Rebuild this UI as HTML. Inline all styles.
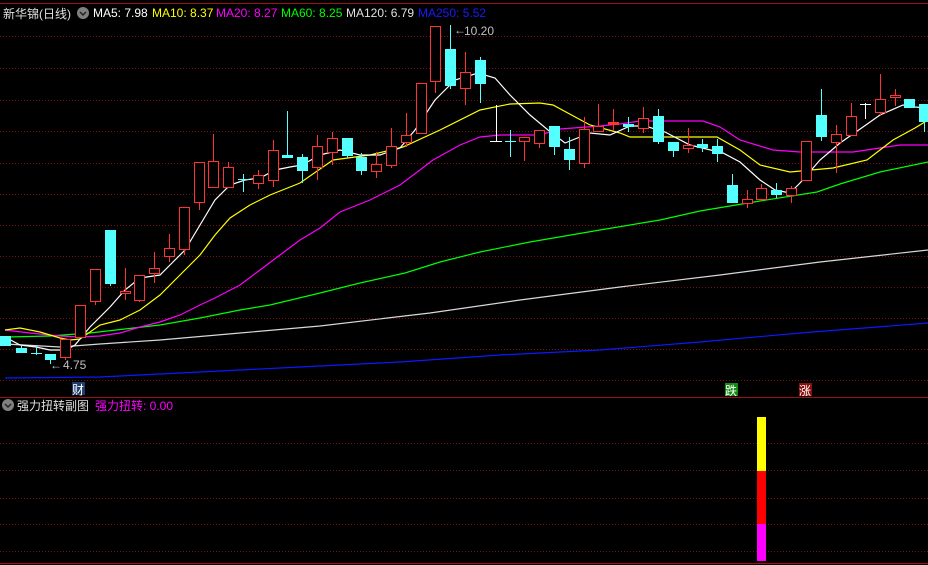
<!DOCTYPE html>
<html><head><meta charset="utf-8"><style>
html,body{margin:0;padding:0;background:#000;width:928px;height:565px;overflow:hidden}
svg{display:block}
text{font-family:"Liberation Sans","Noto Sans CJK SC",sans-serif;font-size:12px}
</style></head><body>
<svg width="928" height="565" viewBox="0 0 928 565" xmlns="http://www.w3.org/2000/svg">
<rect width="928" height="565" fill="#000"/>
<g stroke="#7a1010" stroke-width="1" stroke-dasharray="1,2">
<line x1="0" y1="36.5" x2="928" y2="36.5"/><line x1="0" y1="68.5" x2="928" y2="68.5"/>
<line x1="0" y1="100.5" x2="928" y2="100.5"/><line x1="0" y1="131.5" x2="928" y2="131.5"/>
<line x1="0" y1="163.5" x2="928" y2="163.5"/><line x1="0" y1="194.5" x2="928" y2="194.5"/>
<line x1="0" y1="225.5" x2="928" y2="225.5"/><line x1="0" y1="256.5" x2="928" y2="256.5"/>
<line x1="0" y1="287.5" x2="928" y2="287.5"/><line x1="0" y1="318.5" x2="928" y2="318.5"/>
<line x1="0" y1="349.5" x2="928" y2="349.5"/><line x1="0" y1="380.5" x2="928" y2="380.5"/>
<line x1="0" y1="443.5" x2="928" y2="443.5"/><line x1="0" y1="470.5" x2="928" y2="470.5"/>
<line x1="0" y1="498.5" x2="928" y2="498.5"/><line x1="0" y1="524.5" x2="928" y2="524.5"/>
<line x1="0" y1="551.5" x2="928" y2="551.5"/>
</g>
<g stroke="#a01010" stroke-width="1">
<line x1="0" y1="3.5" x2="928" y2="3.5"/>
<line x1="0" y1="397.5" x2="928" y2="397.5"/>
<line x1="0" y1="563.5" x2="928" y2="563.5"/>
</g>
<!-- MAs -->
<g fill="none" stroke-width="1.2">
<polyline stroke="#0a1aff" points="5,378 100,377 200,372 300,367 400,362 500,355 600,350 700,342 800,333 928,323"/>
<polyline stroke="#d8d8d8" points="5,344 60,347 100,344 160,340 240,333 320,326 430,313 520,300 620,287 720,275 820,262 928,250"/>
<polyline stroke="#00ff00" points="7,337 50,336 90,333 160,325 200,318 240,310 270,305 320,293 360,283 405,273 440,262 480,252 530,242 600,230 660,220 700,211 760,201 817,192 840,184 880,172 928,162"/>
<polyline stroke="#ff00ff" points="5,330 30,333 60,336 80,337 100,336 120,333 140,327 160,322 180,315 200,305 215,298 240,285 260,270 280,255 300,240 320,228 340,212 370,200 400,185 433,160 460,145 480,137 500,135 540,135 560,129 600,126 620,124 640,121 703,121 720,127 740,140 773,150 800,152 853,152 880,148 900,145 928,145"/>
<polyline stroke="#ffff00" points="5,330 20,328 40,332 60,338 70,340 80,339 100,325 120,320 140,310 160,295 180,275 200,255 215,235 230,218 250,205 270,195 300,183 333,160 370,155 403,147 440,130 480,110 510,104 540,103 553,105 590,125 620,133 630,137 717,137 740,150 760,165 790,172 833,168 867,160 893,140 915,128 928,120"/>
<polyline stroke="#ffffff" points="5,337 20,345 36,347 50,350 66,350 75,345 90,327 110,307 125,290 140,278 160,275 170,265 185,250 200,225 215,200 230,185 245,180 260,178 275,170 290,167 302,165 320,155 340,150 360,155 380,155 400,148 415,130 435,100 455,80 478,73 495,78 510,95 530,115 548,130 565,143 590,133 610,135 630,126 645,126 665,132 690,145 723,153 740,162 760,180 775,190 790,193 800,183 820,160 840,143 863,127 880,115 903,105 915,107 928,108"/>
</g>
<!-- candles -->
<g stroke-width="1">
<g stroke="#54ffff" fill="#54ffff">
<line x1="21.5" y1="346" x2="21.5" y2="353"/><rect x="16.5" y="348.5" width="10" height="4"/>
<line x1="36.5" y1="345" x2="36.5" y2="355"/><line x1="31" y1="353.5" x2="42" y2="353.5"/>
<line x1="50.5" y1="354" x2="50.5" y2="364"/><rect x="45.5" y="354.5" width="10" height="5"/>
<rect x="0.5" y="336.5" width="10" height="9"/>
<line x1="110.5" y1="230" x2="110.5" y2="286"/><rect x="105.5" y="230.5" width="10" height="53"/>
<line x1="243.5" y1="174" x2="243.5" y2="192"/><line x1="238" y1="179.5" x2="249" y2="179.5"/>
<line x1="287.5" y1="111" x2="287.5" y2="157"/><rect x="282.5" y="155.5" width="10" height="2"/>
<line x1="302.5" y1="154" x2="302.5" y2="183"/><rect x="297.5" y="157.5" width="10" height="13"/>
<line x1="347.5" y1="138" x2="347.5" y2="158"/><rect x="342.5" y="138.5" width="10" height="17"/>
<line x1="361.5" y1="153" x2="361.5" y2="175"/><rect x="356.5" y="157.5" width="10" height="13"/>
<line x1="450.5" y1="25" x2="450.5" y2="89"/><rect x="445.5" y="49.5" width="10" height="36"/>
<line x1="480.5" y1="57" x2="480.5" y2="103"/><rect x="475.5" y="60.5" width="10" height="23"/>
<line x1="510.5" y1="130" x2="510.5" y2="157"/><line x1="505" y1="141.5" x2="516" y2="141.5"/>
<line x1="554.5" y1="126" x2="554.5" y2="155"/><rect x="549.5" y="126.5" width="10" height="20"/>
<line x1="569.5" y1="137" x2="569.5" y2="170"/><rect x="564.5" y="149.5" width="10" height="10"/>
<line x1="628.5" y1="117" x2="628.5" y2="132"/><rect x="623.5" y="124.5" width="10" height="2"/>
<line x1="658.5" y1="109" x2="658.5" y2="144"/><rect x="653.5" y="116.5" width="10" height="25"/>
<line x1="673.5" y1="142" x2="673.5" y2="157"/><rect x="668.5" y="142.5" width="10" height="8"/>
<line x1="702.5" y1="139" x2="702.5" y2="152"/><rect x="697.5" y="144.5" width="10" height="3"/>
<line x1="717.5" y1="139" x2="717.5" y2="162"/><rect x="712.5" y="146.5" width="10" height="7"/>
<line x1="732.5" y1="174" x2="732.5" y2="203"/><rect x="727.5" y="185.5" width="10" height="17"/>
<line x1="776.5" y1="183" x2="776.5" y2="198"/><rect x="771.5" y="190.5" width="10" height="4"/>
<line x1="821.5" y1="89" x2="821.5" y2="141"/><rect x="816.5" y="115.5" width="10" height="21"/>
<line x1="909.5" y1="99" x2="909.5" y2="108"/><rect x="904.5" y="99.5" width="10" height="8"/>
<line x1="924.5" y1="104" x2="924.5" y2="132"/><rect x="919.5" y="104.5" width="10" height="17"/>
</g>
<g stroke="#ffffff">
<line x1="496.5" y1="105" x2="496.5" y2="141"/><line x1="490" y1="141.5" x2="502" y2="141.5"/>
<line x1="865.5" y1="103" x2="865.5" y2="119"/><line x1="860" y1="104.5" x2="871" y2="104.5"/>
</g>
<g stroke="#ff3333" fill="#000">
<line x1="65.5" y1="339" x2="65.5" y2="360"/><rect x="60.5" y="339.5" width="10" height="18"/>
<rect x="75.5" y="305.5" width="10" height="32"/>
<line x1="95.5" y1="269" x2="95.5" y2="305"/><rect x="90.5" y="269.5" width="10" height="32"/>
<line x1="125.5" y1="268" x2="125.5" y2="300"/><rect x="120.5" y="291.5" width="10" height="2"/>
<line x1="139.5" y1="275" x2="139.5" y2="302"/><rect x="134.5" y="275.5" width="10" height="25"/>
<line x1="154.5" y1="252" x2="154.5" y2="283"/><rect x="149.5" y="268.5" width="10" height="5"/>
<line x1="169.5" y1="234" x2="169.5" y2="262"/><rect x="164.5" y="248.5" width="10" height="8"/>
<line x1="184.5" y1="207" x2="184.5" y2="255"/><rect x="179.5" y="207.5" width="10" height="42"/>
<line x1="199.5" y1="162" x2="199.5" y2="210"/><rect x="194.5" y="162.5" width="10" height="40"/>
<line x1="213.5" y1="134" x2="213.5" y2="187"/><rect x="208.5" y="161.5" width="10" height="26"/>
<line x1="228.5" y1="162" x2="228.5" y2="187"/><rect x="223.5" y="167.5" width="10" height="20"/>
<line x1="258.5" y1="170" x2="258.5" y2="189"/><rect x="253.5" y="175.5" width="10" height="8"/>
<line x1="273.5" y1="140" x2="273.5" y2="187"/><rect x="268.5" y="150.5" width="10" height="30"/>
<line x1="317.5" y1="135" x2="317.5" y2="180"/><rect x="312.5" y="146.5" width="10" height="21"/>
<line x1="332.5" y1="132" x2="332.5" y2="165"/><rect x="327.5" y="138.5" width="10" height="14"/>
<line x1="376.5" y1="152" x2="376.5" y2="178"/><rect x="371.5" y="164.5" width="10" height="7"/>
<line x1="391.5" y1="128" x2="391.5" y2="168"/><rect x="386.5" y="146.5" width="10" height="19"/>
<line x1="406.5" y1="113" x2="406.5" y2="147"/><rect x="401.5" y="135.5" width="10" height="7"/>
<rect x="416.5" y="83.5" width="10" height="50"/>
<line x1="435.5" y1="26" x2="435.5" y2="93"/><rect x="430.5" y="26.5" width="10" height="55"/>
<line x1="465.5" y1="52" x2="465.5" y2="105"/><rect x="460.5" y="72.5" width="10" height="16"/>
<line x1="524.5" y1="137" x2="524.5" y2="161"/><rect x="519.5" y="137.5" width="10" height="4"/>
<line x1="539.5" y1="130" x2="539.5" y2="148"/><rect x="534.5" y="130.5" width="10" height="13"/>
<line x1="584.5" y1="117" x2="584.5" y2="168"/><rect x="579.5" y="129.5" width="10" height="34"/>
<line x1="598.5" y1="104" x2="598.5" y2="131"/><rect x="593.5" y="126.5" width="10" height="5"/>
<line x1="613.5" y1="109" x2="613.5" y2="131"/><rect x="608.5" y="122.5" width="10" height="2" fill="#ff3333"/>
<line x1="643.5" y1="107" x2="643.5" y2="133"/><rect x="638.5" y="118.5" width="10" height="10"/>
<line x1="688.5" y1="128" x2="688.5" y2="153"/><rect x="683.5" y="145.5" width="10" height="3"/>
<line x1="747.5" y1="190" x2="747.5" y2="208"/><rect x="742.5" y="199.5" width="10" height="4"/>
<line x1="761.5" y1="184" x2="761.5" y2="201"/><rect x="756.5" y="188.5" width="10" height="11"/>
<line x1="791.5" y1="186" x2="791.5" y2="203"/><rect x="786.5" y="188.5" width="10" height="7"/>
<rect x="801.5" y="141.5" width="10" height="39"/>
<line x1="836.5" y1="125" x2="836.5" y2="173"/><rect x="831.5" y="134.5" width="10" height="8"/>
<line x1="851.5" y1="103" x2="851.5" y2="135"/><rect x="846.5" y="116.5" width="10" height="19"/>
<line x1="880.5" y1="74" x2="880.5" y2="115"/><rect x="875.5" y="99.5" width="10" height="13"/>
<line x1="895.5" y1="89" x2="895.5" y2="106"/><rect x="890.5" y="95.5" width="10" height="2"/>
</g>
</g>
<!-- labels -->
<g fill="#c0c0c0">
<text x="454" y="34" font-size="11">←</text>
<text x="464" y="35">10.20</text>
<text x="50" y="369" font-size="11">←</text>
<text x="63" y="369">4.75</text>
</g>
<rect x="72" y="382" width="13" height="13" fill="#1c3c6c"/>
<text x="72" y="394" fill="#fff" font-size="12">财</text>
<rect x="725" y="383" width="13" height="13" fill="#138a13"/>
<text x="725" y="395" fill="#fff" font-size="12">跌</text>
<rect x="799" y="383" width="13" height="13" fill="#8a1010"/>
<text x="799" y="395" fill="#fff" font-size="12">涨</text>
<!-- header -->
<text x="3" y="18" fill="#e0e0e0" font-size="13">新华锦(日线)</text>
<circle cx="83" cy="13" r="6" fill="#808080"/>
<path d="M80 12 L83 15 L86 12" stroke="#222" stroke-width="1.5" fill="none"/>
<text x="93" y="17" fill="#ffffff">MA5: 7.98</text>
<text x="152" y="17" fill="#ffff00">MA10: 8.37</text>
<text x="216" y="17" fill="#ff00ff">MA20: 8.27</text>
<text x="281" y="17" fill="#00ff00">MA60: 8.25</text>
<text x="346" y="17" fill="#e0e0e0">MA120: 6.79</text>
<text x="418" y="17" fill="#1a1aff">MA250: 5.52</text>
<!-- lower header -->
<circle cx="8" cy="405" r="6" fill="#808080"/>
<path d="M5 404 L8 407 L11 404" stroke="#222" stroke-width="1.5" fill="none"/>
<text x="17" y="410" fill="#e0e0e0" font-size="12">强力扭转副图</text>
<text x="95" y="410" fill="#ff00ff" font-size="12">强力扭转: 0.00</text>
<!-- bar -->
<rect x="757" y="417" width="9" height="54" fill="#ffff00"/>
<rect x="757" y="471" width="9" height="53" fill="#ff0000"/>
<rect x="757" y="524" width="9" height="37" fill="#ff00ff"/>
</svg>
</body></html>
